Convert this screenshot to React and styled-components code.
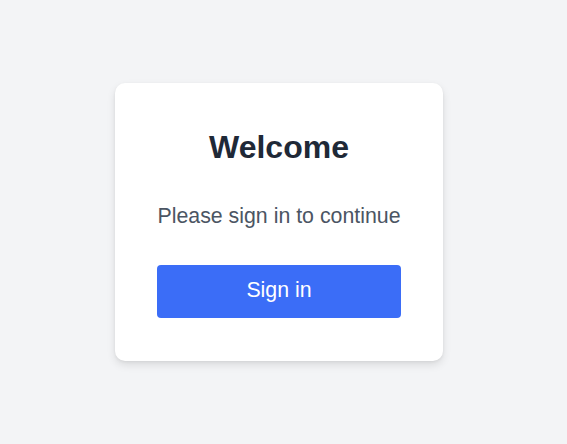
import styled, { createGlobalStyle } from "styled-components";

const GlobalStyle = createGlobalStyle`
  html, body {
    margin: 0;
    padding: 0;
    background: #f3f4f6;
    font-family: "Liberation Sans", Arial, sans-serif;
  }
`

const Page = styled.div`
  min-height: 444px;
  display: flex;
  align-items: center;
  justify-content: center;
  padding-right: 9px;
  box-sizing: border-box;
`
const Card = styled.div`
  width: 328px;
  box-sizing: border-box;
  padding: 46px 42px 43px;
  background: #ffffff;
  border-radius: 10px;
  box-shadow: 0 4px 8px rgba(0, 0, 0, 0.1), 0 1px 3px rgba(0, 0, 0, 0.06);
  display: flex;
  flex-direction: column;
  align-items: stretch;
  text-align: center;
`
const Title = styled.h1`
  margin: 0;
  font-size: 32px;
  line-height: 36px;
  font-weight: 700;
  color: #1f2937;
`
const Subtitle = styled.p`
  margin: 37px 0 35px;
  font-size: 21.33px;
  line-height: 28px;
  color: #4b5563;
`
const Button = styled.button`
  height: 53px;
  padding: 0 0 3px;
  border: none;
  border-radius: 4px;
  background: #3b6df7;
  color: #ffffff;
  font-family: inherit;
  font-size: 21.33px;
  cursor: pointer;
`

const App = () => {
  return (
    <Page>
      <GlobalStyle />
      <Card>
        <Title>Welcome</Title>
        <Subtitle>Please sign in to continue</Subtitle>
        <Button>Sign in</Button>
      </Card>
    </Page>
  )
}

export default App;
